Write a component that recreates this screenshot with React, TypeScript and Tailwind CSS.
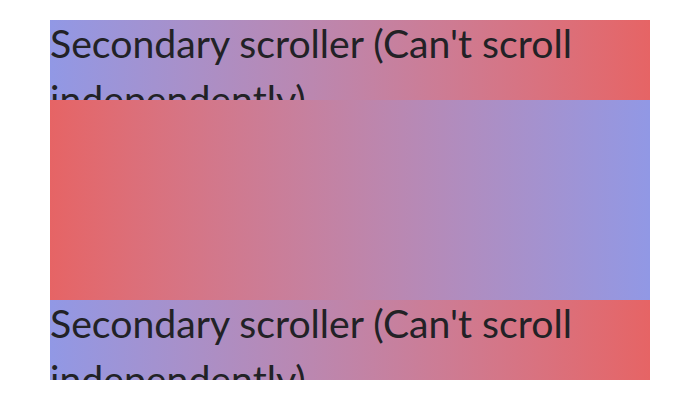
export default function App() {
  const text = "Secondary scroller (Can't scroll independently)";
  return (
    <div className="bg-white w-[700px] h-[400px] py-5 px-[50px] font-['Lato',sans-serif] text-[#222226]">
      <div className="h-20 overflow-hidden bg-gradient-to-r from-[#9198e5] to-[#e66465]">
        <p className="-mt-[5px] text-[39.2px] leading-[56px]">{text}</p>
      </div>
      <div className="h-[200px] bg-gradient-to-r from-[#e66465] to-[#9198e5]" />
      <div className="h-20 overflow-hidden bg-gradient-to-r from-[#9198e5] to-[#e66465]">
        <p className="-mt-[5px] text-[39.2px] leading-[56px]">{text}</p>
      </div>
    </div>
  );
}
